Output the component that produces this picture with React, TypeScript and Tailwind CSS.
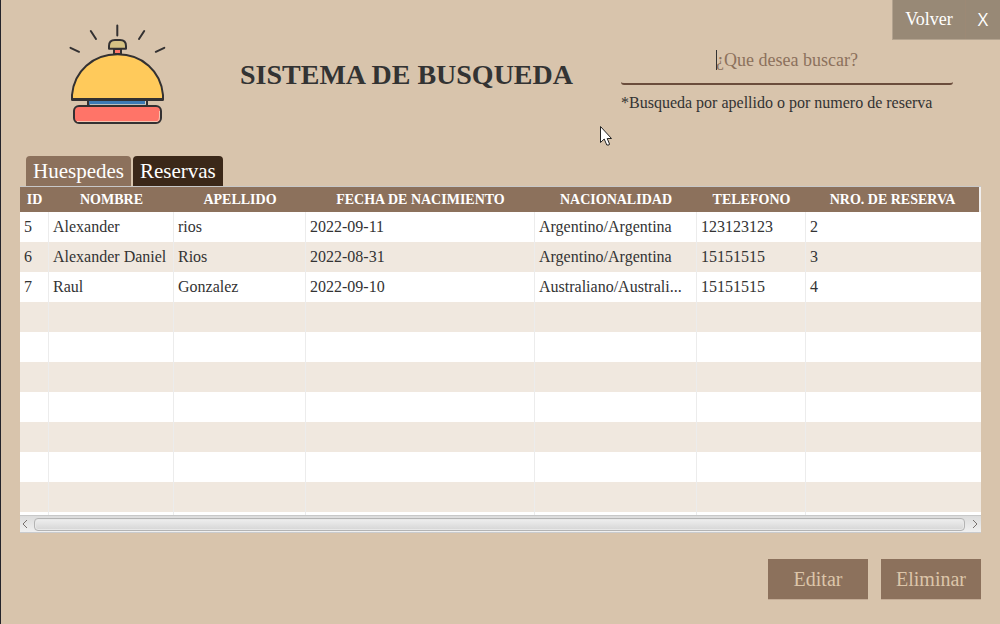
import { useState } from "react";

type Guest = {
  id: string;
  nombre: string;
  apellido: string;
  nacimiento: string;
  nacionalidad: string;
  telefono: string;
  reserva: string;
};

const columns: { key: keyof Guest; label: string; width: string }[] = [
  { key: "id", label: "ID", width: "w-[29px]" },
  { key: "nombre", label: "NOMBRE", width: "w-[125px]" },
  { key: "apellido", label: "APELLIDO", width: "w-[132px]" },
  { key: "nacimiento", label: "FECHA DE NACIMIENTO", width: "w-[229px]" },
  { key: "nacionalidad", label: "NACIONALIDAD", width: "w-[162px]" },
  { key: "telefono", label: "TELEFONO", width: "w-[109px]" },
  { key: "reserva", label: "NRO. DE RESERVA", width: "w-auto" },
];

const guests: Guest[] = [
  { id: "5", nombre: "Alexander", apellido: "rios", nacimiento: "2022-09-11", nacionalidad: "Argentino/Argentina", telefono: "123123123", reserva: "2" },
  { id: "6", nombre: "Alexander Daniel", apellido: "Rios", nacimiento: "2022-08-31", nacionalidad: "Argentino/Argentina", telefono: "15151515", reserva: "3" },
  { id: "7", nombre: "Raul", apellido: "Gonzalez", nacimiento: "2022-09-10", nacionalidad: "Australiano/Australi...", telefono: "15151515", reserva: "4" },
];

const emptyRows = [0, 1, 2, 3, 4, 5, 6];

function Bell() {
  return (
    <svg viewBox="0 0 120 115" className="h-[115px] w-[120px] flex-none" aria-hidden="true" fill="none" stroke="#333132" strokeWidth="2" strokeLinejoin="round">
      <path d="M57.3 10.5V20.500M30.8 16L36 24M84.2 16L79 24M10.500 32.8L19 36.800M104.300 32.8L95.800 36.800" strokeLinecap="round" />
      <rect x="28" y="85" width="59" height="6" fill="#3d7ab5" />
      <path d="M30 89.7H85.5V86" stroke="#d8d0c2" strokeWidth="1" />
      <rect x="54" y="34" width="7" height="5" fill="#ff7468" />
      <path d="M49 33.8V31Q49 25 55 25H60Q66 25 66 31V33.8Z" fill="#d5c283" />
      <path d="M12 84.5V80C14 56 33 39.3 57.5 39.3S101 56 103 80V84.5Z" fill="#ffca5b" />
      <path d="M11.5 84.5H103.5" strokeWidth="3" />
      <rect x="14" y="91" width="87" height="17" rx="5" fill="#ff7468" />
      <path d="M17 106.500H97Q99.5 106 99.5 102V96" stroke="#f4c3af" strokeWidth="1" />
    </svg>
  );
}

function GuestTable() {
  return (
    <div className="border-t border-[#c8c8c8]">
      <table className="w-full table-fixed border-separate border-spacing-0 text-[16px] text-[#333333]">
        <colgroup>
          {columns.map((c) => (
            <col key={c.key} className={c.width} />
          ))}
        </colgroup>
        <thead>
          <tr className="h-[25px] bg-[#8c715c] text-[14px] leading-5 text-white">
            {columns.map((c) => (
              <th key={c.key} scope="col" className="border-[#f0eeee] p-0 text-center font-bold whitespace-nowrap last:border-r-2">
                {c.label}
              </th>
            ))}
          </tr>
        </thead>
        <tbody>
          {guests.map((g) => (
            <tr key={g.id} className="h-[30px] odd:bg-white even:bg-[#f0e8df]">
              {columns.map((c) => (
                <td key={c.key} className="truncate border-r border-[#ececec] p-0 px-1 leading-5 last:border-r-0">
                  {g[c.key]}
                </td>
              ))}
            </tr>
          ))}
          {emptyRows.map((r) => (
            <tr key={r} className="h-[30px] odd:bg-white even:bg-[#f0e8df]">
              {columns.map((c) => (
                <td key={c.key} className="border-r border-[#ececec] p-0 last:border-r-0" />
              ))}
            </tr>
          ))}
          <tr className="h-[3px] bg-white">
            {columns.map((c) => (
              <td key={c.key} className="border-r border-[#ececec] p-0 last:border-r-0" />
            ))}
          </tr>
        </tbody>
      </table>
      <div className="flex h-[18px] items-center border-y border-t-[#c8c8c8] border-b-[#c9cbce] bg-linear-to-b from-[#dcdcdc] to-[#f0f0f0]">
        <button type="button" aria-label="Desplazar a la izquierda" className="flex w-[14px] flex-none justify-center pr-1">
          <svg viewBox="0 0 6 10" className="h-[10px] w-[6px]" fill="none" stroke="#77716e">
            <path d="M5 1L1 5L5 9" />
          </svg>
        </button>
        <div className="h-[13px] flex-1 rounded-[4px] border border-[#b4b4b4] bg-linear-to-b from-[#efefef] to-[#d6d6d6] shadow-[inset_0_0_0_1px_#e8e8e8]" />
        <button type="button" aria-label="Desplazar a la derecha" className="flex w-[16px] flex-none justify-center pl-1">
          <svg viewBox="0 0 6 10" className="h-[10px] w-[6px]" fill="none" stroke="#77716e">
            <path d="M1 1L5 5L1 9" />
          </svg>
        </button>
      </div>
    </div>
  );
}

export default function App() {
  const [query, setQuery] = useState("");
  const [tab, setTab] = useState("Reservas");

  return (
    <main className="relative min-h-screen border-l border-[#24242b] bg-[#d8c4ac] font-['Liberation_Serif',serif] text-[#333333]">
      <header className="flex">
        <div className="flex flex-1 pt-[15px] pl-[59px]">
          <Bell />
          <h1 className="mt-[44px] ml-[60px] text-[28px] leading-8 font-bold whitespace-nowrap">SISTEMA DE BUSQUEDA</h1>
        </div>
        <div className="w-[379px] flex-none">
          <div className="flex justify-end">
            <div className="flex h-[40px] border-b border-l border-[#b3a38f] bg-[#988976] text-[18px] text-white">
              <button type="button" className="w-[72px]">Volver</button>
              <button type="button" aria-label="Cerrar" className="w-[35px] border-l border-[#9c8975] font-['Open_Sans',sans-serif]">X</button>
            </div>
          </div>
          <div className="relative mr-[47px]">
            <input
              aria-label="Buscar"
              aria-describedby="search-help"
              value={query}
              onChange={(e) => setQuery(e.target.value)}
              placeholder="¿Que desea buscar?"
              className="block h-[45px] w-full rounded-b-[3px] border-b-2 border-[#6b4d3c] bg-transparent pb-[2px] text-center text-[18px] outline-none placeholder:text-[#8c715c]"
            />
            <span className="absolute top-[10px] left-[95px] h-5 w-px bg-[#333333]" />
          </div>
          <p id="search-help" className="mt-2 text-[16px] leading-5 whitespace-nowrap">*Busqueda por apellido o por numero de reserva</p>
        </div>
      </header>

      <section className="mt-[26px] mr-[19px] ml-[19px]">
        <div role="tablist" className="flex gap-[2px] pl-[6px] text-[21px] text-white">
          {["Huespedes", "Reservas"].map((name) => (
            <button
              key={name}
              type="button"
              role="tab"
              aria-selected={tab === name}
              onClick={() => setTab(name)}
              className={
                tab === name
                  ? "h-[30px] rounded-t-[4px] bg-[#3b2819] px-[7px]"
                  : "h-[30px] rounded-t-[4px] bg-[#8c715c] px-[7px]"
              }
            >
              {name}
            </button>
          ))}
        </div>
        <GuestTable />
        <div className="mt-[26px] flex justify-end gap-[13px] text-[20px] text-[#dcc5a9]">
          <button type="button" className="h-[40px] w-[100px] bg-[#8c715c] shadow-[0_1px_0_#c4ac96]">Editar</button>
          <button type="button" className="h-[40px] w-[100px] bg-[#8c715c] shadow-[0_1px_0_#c4ac96]">Eliminar</button>
        </div>
      </section>

      <svg viewBox="0 0 12 20" className="absolute top-[126px] left-[599px] h-5 w-3" aria-hidden="true">
        <path d="M0.500 0.500V16.500L4.200 13L6.800 19H9L9.500 18L7.200 12.500H11.500Z" fill="#fff" stroke="#222" />
      </svg>
    </main>
  );
}
